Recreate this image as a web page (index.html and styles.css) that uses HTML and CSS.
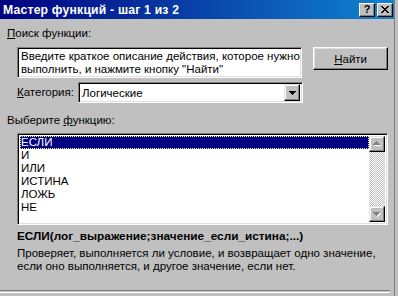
FILE: index.html
```html
<!DOCTYPE html>
<html lang="ru">
<head>
    <meta charset="UTF-8">
    <title>Мастер функций - шаг 1 из 2</title>
    <link rel="stylesheet" href="styles.css">
</head>
<body>
    <div class="window">
        <div class="titlebar">
            <span class="title">Мастер функций - шаг 1 из 2</span>
            <div class="title-buttons">
                <span class="tbtn help">?</span>
                <span class="tbtn close">
                    <svg width="8" height="7" viewBox="0 0 8 7" shape-rendering="crispEdges">
                        <path d="M0 0h2v1h-2zM6 0h2v1h-2zM1 1h2v1h-2zM5 1h2v1h-2zM2 2h4v1h-4zM3 3h2v1h-2zM2 4h4v1h-4zM1 5h2v1h-2zM5 5h2v1h-2zM0 6h2v1h-2zM6 6h2v1h-2z" fill="#000"/>
                    </svg>
                </span>
            </div>
        </div>

        <div class="content">
            <div class="label"><u>П</u>оиск функции:</div>
            <div class="search-row">
                <div class="field search-box">Введите краткое описание действия, которое нужно<br>выполнить, и нажмите кнопку "Найти"</div>
                <button class="btn"><u>Н</u>айти</button>
            </div>

            <div class="category-row">
                <span class="label cat-label"><u>К</u>атегория:</span>
                <div class="field select">
                    <span class="select-value">Логические</span>
                    <span class="drop-btn">
                        <svg width="7" height="4" viewBox="0 0 7 4" shape-rendering="crispEdges">
                            <path d="M0 0h7v1h-7zM1 1h5v1h-5zM2 2h3v1h-3zM3 3h1v1h-1z" fill="#000"/>
                        </svg>
                    </span>
                </div>
            </div>

            <div class="label list-label">Выберите <u>ф</u>ункцию:</div>
            <div class="field listbox">
                <ul class="items">
                    <li class="selected">ЕСЛИ</li>
                    <li>И</li>
                    <li>ИЛИ</li>
                    <li>ИСТИНА</li>
                    <li>ЛОЖЬ</li>
                    <li>НЕ</li>
                </ul>
                <div class="scrollbar">
                    <span class="sbtn">
                        <svg width="12" height="12" viewBox="0 0 12 12" shape-rendering="crispEdges">
                            <path d="M6 4h1v1h-1zM5 5h3v1h-3zM4 6h5v1h-5zM3 7h7v1h-7z" fill="#fff"/>
                            <path d="M5 3h1v1h-1zM4 4h3v1h-3zM3 5h5v1h-5zM2 6h7v1h-7z" fill="#808080"/>
                        </svg>
                    </span>
                    <span class="track"></span>
                    <span class="sbtn">
                        <svg width="12" height="12" viewBox="0 0 12 12" shape-rendering="crispEdges">
                            <path d="M3 5h7v1h-7zM4 6h5v1h-5zM5 7h3v1h-3zM6 8h1v1h-1z" fill="#fff"/>
                            <path d="M2 4h7v1h-7zM3 5h5v1h-5zM4 6h3v1h-3zM5 7h1v1h-1z" fill="#808080"/>
                        </svg>
                    </span>
                </div>
            </div>

            <div class="signature">ЕСЛИ(лог_выражение;значение_если_истина;...)</div>
            <div class="description">Проверяет, выполняется ли условие, и возвращает одно значение,<br>если оно выполняется, и другое значение, если нет.</div>
        </div>

        <div class="separator"></div>
    </div>
</body>
</html>
```

FILE: styles.css
```css
body {
    margin: 0;
    padding: 0;
    background-color: #c0c0c0;
    font-family: "Liberation Sans", Arial, sans-serif;
    font-size: 11.5px;
    color: #000;
}
.window {
    width: 395px;
    height: 296px;
    display: flex;
    flex-direction: column;
    background-color: #c0c0c0;
    border-right: 1px solid #808080;
    box-sizing: border-box;
    overflow: hidden;
}
.titlebar {
    height: 19px;
    flex-shrink: 0;
    display: flex;
    align-items: center;
    justify-content: space-between;
    padding: 0 1px 0 3px;
    background: linear-gradient(90deg, #000080, #1084d0);
}
.title {
    color: #fff;
    font-weight: bold;
    font-size: 12.2px;
    letter-spacing: 0.2px;
}
.title-buttons {
    display: flex;
    gap: 2px;
}
.tbtn {
    width: 16px;
    height: 14px;
    box-sizing: border-box;
    display: flex;
    align-items: center;
    justify-content: center;
    background: #c0c0c0;
    border: 1px solid;
    border-color: #fff #000 #000 #fff;
    box-shadow: inset -1px -1px #808080;
}
.help {
    font-weight: bold;
    font-size: 11px;
    line-height: 1;
}
.content {
    flex: 1;
    padding: 8px 6px 0 7px;
}
.label {
    line-height: 13px;
}
u {
    text-decoration: underline;
    text-underline-offset: 1px;
}
.field {
    background: #fff;
    box-sizing: border-box;
    border: 1px solid;
    border-color: #808080 #fff #fff #808080;
    box-shadow: inset 1px 1px #000, inset -1px -1px #dfdfdf;
}
.search-row {
    display: flex;
    align-items: flex-start;
    margin-top: 7px;
    padding-left: 10px;
}
.search-box {
    width: 286px;
    height: 31px;
    padding: 2px 3px;
    line-height: 13px;
    white-space: nowrap;
    overflow: hidden;
}
.btn {
    margin-left: 11px;
    width: 75px;
    height: 23px;
    padding: 0;
    font-family: inherit;
    font-size: 11.5px;
    color: #000;
    background: #c0c0c0;
    border: 1px solid;
    border-color: #fff #000 #000 #fff;
    box-shadow: inset -1px -1px #808080, inset 1px 1px #dfdfdf;
}
.category-row {
    display: flex;
    align-items: center;
    margin-top: 4px;
    padding-left: 10px;
}
.cat-label {
    width: 61px;
}
.select {
    width: 225px;
    height: 21px;
    display: flex;
    align-items: center;
    justify-content: space-between;
    padding: 2px 2px 2px 3px;
}
.drop-btn {
    width: 16px;
    height: 17px;
    box-sizing: border-box;
    display: flex;
    align-items: center;
    justify-content: center;
    background: #c0c0c0;
    border: 1px solid;
    border-color: #dfdfdf #000 #000 #dfdfdf;
    box-shadow: inset -1px -1px #808080, inset 1px 1px #fff;
}
.list-label {
    margin-top: 11px;
}
.listbox {
    margin-top: 6px;
    margin-left: 10px;
    width: 371px;
    height: 92px;
    padding: 2px;
    display: flex;
}
.items {
    flex: 1;
    list-style: none;
    margin: 0;
    padding: 0;
}
.items li {
    height: 13px;
    line-height: 13px;
    padding-left: 1px;
}
.items li.selected {
    background: #000080;
    color: #fff;
    outline: 1px dotted #ffff80;
    outline-offset: -1px;
}
.scrollbar {
    width: 16px;
    display: flex;
    flex-direction: column;
}
.sbtn {
    width: 16px;
    height: 16px;
    box-sizing: border-box;
    display: flex;
    align-items: center;
    justify-content: center;
    background: #c0c0c0;
    border: 1px solid;
    border-color: #dfdfdf #000 #000 #dfdfdf;
    box-shadow: inset -1px -1px #808080, inset 1px 1px #fff;
}
.track {
    flex: 1;
    background: conic-gradient(#fff 25%, #c0c0c0 0 50%, #fff 0 75%, #c0c0c0 0) 0 0 / 2px 2px;
}
.signature {
    margin-top: 5px;
    margin-left: 10px;
    font-weight: bold;
    font-size: 11.8px;
    line-height: 13px;
}
.description {
    margin-top: 4px;
    margin-left: 10px;
    line-height: 13px;
}
.separator {
    height: 1px;
    margin: 0 4px 3px 0;
    border-top: 1px solid #808080;
    border-bottom: 1px solid #fff;
}
```
